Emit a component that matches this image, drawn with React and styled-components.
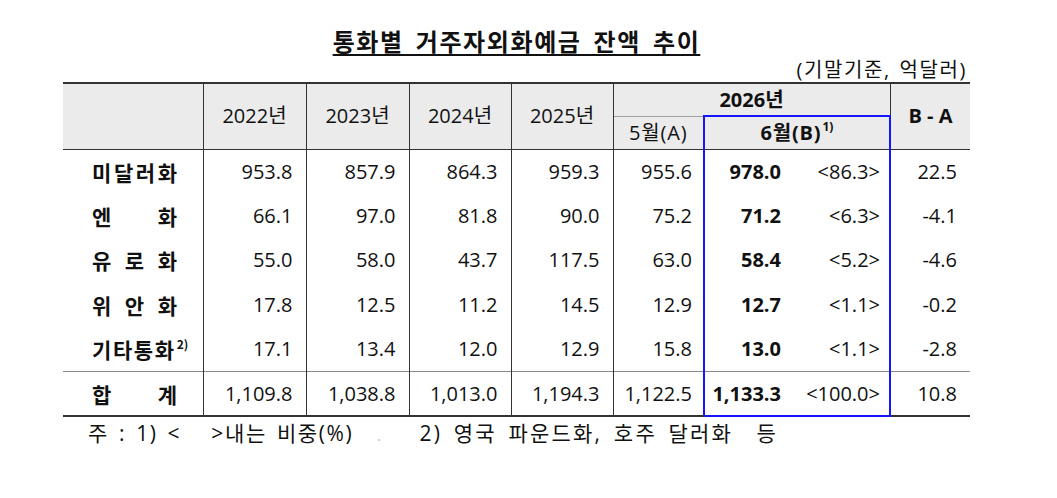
import React from 'react'
import styled, { createGlobalStyle } from 'styled-components'

const GlobalStyle = createGlobalStyle`
  body {
    margin: 0;
    background: #fff;
    color: #111;
    font-family: "Open Sans", "Noto Sans CJK KR", sans-serif;
  }
`

const BLUE = '#1515ff'
const LINE = '#333'

const Page = styled.div`
  width: 907px;
  padding: 26px 0 0 63px;
`

const Title = styled.h2`
  margin: 0;
  text-align: center;
  font-family: "Noto Sans CJK KR", sans-serif;
  font-size: 24px;
  font-weight: 700;
  line-height: 30px;
  letter-spacing: 1.6px;
  word-spacing: 5px;
  text-decoration: underline;
  text-decoration-thickness: 1.5px;
  text-underline-offset: 3px;
`

const Unit = styled.div`
  margin-top: 2px;
  padding-right: 3px;
  text-align: right;
  font-size: 20px;
  line-height: 24px;
  letter-spacing: 1.6px;
  word-spacing: 2px;
`

const Table = styled.table`
  width: 907px;
  border-collapse: collapse;
  table-layout: fixed;
`

const HeadRow = styled.tr`
  height: 33px;
`

const BodyRow = styled.tr`
  height: ${p => (p.$total ? '44px' : '44.6px')};
`

const Head = styled.th`
  padding: 0;
  background: #ebebeb;
  font-size: 20px;
  font-weight: ${p => (p.$bold ? 700 : 400)};
  line-height: 24px;
  text-align: center;
  vertical-align: middle;
  border-top: ${p => (p.$top ? `2px solid ${LINE}` : p.$sub ? '1px solid #a0a0a0' : 'none')};
  border-bottom: ${p => (p.$bottom ? `1px solid ${LINE}` : 'none')};
  border-left: ${p => (p.$first ? 'none' : `1px solid ${LINE}`)};
`

const BoxHead = styled(Head)`
  border-top: 2px solid ${BLUE};
  border-left: 2px solid ${BLUE};
  border-right: 2px solid ${BLUE};
`

const Sub = styled.span`
  letter-spacing: 0.8px;
`

const Sup = styled.sup`
  font-size: 12px;
  font-weight: 700;
  line-height: 0;
  vertical-align: 9px;
  margin-left: 1px;
  letter-spacing: 0;
`

const LabelCell = styled.td`
  padding: 0 0 0 29px;
  vertical-align: middle;
  border-top: ${p => (p.$total ? '1px solid #8a8a8a' : 'none')};
  border-bottom: ${p => (p.$total ? `2px solid ${LINE}` : 'none')};
`

const Spread = styled.span`
  display: flex;
  justify-content: space-between;
  width: 85px;
  font-family: "Noto Sans CJK KR", sans-serif;
  font-size: 21px;
  font-weight: 700;
  line-height: 26px;
  white-space: nowrap;
  letter-spacing: ${p => (p.$tight ? '1.6px' : '0')};
`

const Num = styled.td`
  padding: 0 ${p => p.$pad ?? 13}px 0 0;
  text-align: right;
  vertical-align: middle;
  font-size: 20px;
  font-weight: ${p => (p.$bold ? 700 : 400)};
  line-height: 24px;
  white-space: nowrap;
  border-left: ${p =>
    p.$boxLeft ? `2px solid ${BLUE}` : p.$inBox ? 'none' : `1px solid ${LINE}`};
  border-right: ${p => (p.$boxRight ? `2px solid ${BLUE}` : 'none')};
  border-top: ${p => (p.$total ? '1px solid #8a8a8a' : 'none')};
  border-bottom: ${p =>
    p.$total ? `2px solid ${p.$boxLeft || p.$boxRight ? BLUE : LINE}` : 'none'};
`

const Note = styled.div`
  display: flex;
  align-items: baseline;
  margin-top: 3px;
  padding-left: 25px;
  font-size: 21px;
  line-height: 26px;
  letter-spacing: 1.6px;
  word-spacing: 3px;
  white-space: pre;
`

const Dot = styled.span`
  margin-left: 24px;
  color: #b8b8b8;
  font-size: 14px;
`

const Second = styled.span`
  margin-left: 37px;
  letter-spacing: 2.2px;
  word-spacing: 4px;
`

const rows = [
  { label: ['미', '달', '러', '화'], years: ['953.8', '857.9', '864.3', '959.3'], a: '955.6', b: '978.0', share: '<86.3>', diff: '22.5' },
  { label: ['엔', '화'], years: ['66.1', '97.0', '81.8', '90.0'], a: '75.2', b: '71.2', share: '<6.3>', diff: '-4.1' },
  { label: ['유', '로', '화'], years: ['55.0', '58.0', '43.7', '117.5'], a: '63.0', b: '58.4', share: '<5.2>', diff: '-4.6' },
  { label: ['위', '안', '화'], years: ['17.8', '12.5', '11.2', '14.5'], a: '12.9', b: '12.7', share: '<1.1>', diff: '-0.2' },
  { label: ['기타통화'], note: '2)', years: ['17.1', '13.4', '12.0', '12.9'], a: '15.8', b: '13.0', share: '<1.1>', diff: '-2.8' },
  { label: ['합', '계'], total: true, years: ['1,109.8', '1,038.8', '1,013.0', '1,194.3'], a: '1,122.5', b: '1,133.3', share: '<100.0>', diff: '10.8' },
]

const widths = [140, 103, 103, 102, 102, 91, 90, 96, 80]

const App = () => (
  <>
    <GlobalStyle />
    <Page>
      <Title>통화별 거주자외화예금 잔액 추이</Title>
      <Unit>(기말기준, 억달러)</Unit>
      <Table>
        <colgroup>
          {widths.map((w, i) => (
            <col key={i} style={{ width: w }} />
          ))}
        </colgroup>
        <thead>
          <HeadRow>
            <Head rowSpan={2} $first $top $bottom />
            {['2022년', '2023년', '2024년', '2025년'].map(y => (
              <Head key={y} rowSpan={2} $top $bottom>
                {y}
              </Head>
            ))}
            <Head colSpan={3} $top $bold>
              2026년
            </Head>
            <Head rowSpan={2} $top $bottom $bold>
              B - A
            </Head>
          </HeadRow>
          <HeadRow>
            <Head $sub $bottom>
              <Sub>5월(A)</Sub>
            </Head>
            <BoxHead colSpan={2} $bottom $bold>
              <Sub>6월(B)</Sub>
              <Sup>1)</Sup>
            </BoxHead>
          </HeadRow>
        </thead>
        <tbody>
          {rows.map(r => (
            <BodyRow key={r.label.join('')} $total={r.total}>
              <LabelCell $total={r.total}>
                <Spread $tight={!!r.note}>
                  {r.label.map((c, i) => (
                    <span key={i}>
                      {c}
                      {r.note && <Sup>{r.note}</Sup>}
                    </span>
                  ))}
                </Spread>
              </LabelCell>
              {r.years.map((v, i) => (
                <Num key={i} $total={r.total}>
                  {v}
                </Num>
              ))}
              <Num $total={r.total} $pad={11}>{r.a}</Num>
              <Num $total={r.total} $boxLeft $bold $pad={13}>
                {r.b}
              </Num>
              <Num $total={r.total} $inBox $boxRight $pad={9}>
                {r.share}
              </Num>
              <Num $total={r.total}>{r.diff}</Num>
            </BodyRow>
          ))}
        </tbody>
      </Table>
      <Note>
        <span>주 : 1) &lt;   &gt;내는 비중(%)</span>
        <Dot>.</Dot>
        <Second>2) 영국 파운드화, 호주 달러화  등</Second>
      </Note>
    </Page>
  </>
)

export default App
